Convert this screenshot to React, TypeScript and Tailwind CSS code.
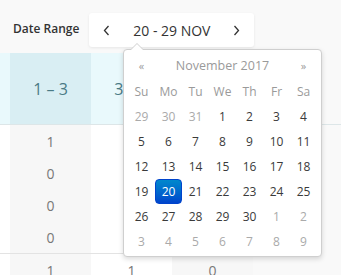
import { ReactNode } from "react";

type Day = { n: number; muted?: boolean; active?: boolean };

const weeks: Day[][] = [
  [{ n: 29, muted: true }, { n: 30, muted: true }, { n: 31, muted: true }, { n: 1 }, { n: 2 }, { n: 3 }, { n: 4 }],
  [5, 6, 7, 8, 9, 10, 11].map((n) => ({ n })),
  [12, 13, 14, 15, 16, 17, 18].map((n) => ({ n })),
  [19, 20, 21, 22, 23, 24, 25].map((n) => ({ n, active: n === 20 })),
  [{ n: 26 }, { n: 27 }, { n: 28 }, { n: 29 }, { n: 30 }, { n: 1, muted: true }, { n: 2, muted: true }],
  [3, 4, 5, 6, 7, 8, 9].map((n) => ({ n, muted: true })),
];

const dayNames = ["Su", "Mo", "Tu", "We", "Th", "Fr", "Sa"];

const rows = [
  ["1", "2", "0"],
  ["0", "1", "0"],
  ["0", "0", "1"],
  ["0", "0", "0"],
];

function Chevron({ dir }: { dir: "left" | "right" }) {
  return (
    <svg width="7" height="11" viewBox="0 0 7 11" fill="none">
      <path
        d={dir === "left" ? "M5.5 1 L1.5 5.5 L5.5 10" : "M1.5 1 L5.5 5.5 L1.5 10"}
        stroke="#333"
        strokeWidth="1.3"
      />
    </svg>
  );
}

function Cell({ children, shade }: { children?: ReactNode; shade?: boolean }) {
  return (
    <div className={shade ? "w-[81px] h-[32px] flex items-center justify-center bg-[#f7f7f7]" : "w-[81px] h-[32px] flex items-center justify-center"}>
      {children}
    </div>
  );
}

function Calendar() {
  return (
    <div className="absolute left-[123px] top-[49px] w-[199px] bg-white border border-[#cfcfcf] rounded-[4px] shadow-[0_2px_5px_rgba(0,0,0,0.15)] px-[4px] pt-[4px] pb-[2px] text-[12px]">
      <div className="absolute -top-[7px] left-[6px] w-0 h-0 border-x-[7px] border-x-transparent border-b-[7px] border-b-[#cfcfcf]" />
      <div className="absolute -top-[6px] left-[7px] w-0 h-0 border-x-[6px] border-x-transparent border-b-[6px] border-b-white" />
      <div className="grid grid-cols-7 text-[#9a9a9a]">
        <div className="h-[25px] flex items-center justify-center text-[11px]">«</div>
        <div className="col-span-5 h-[25px] flex items-center justify-center text-[12.5px]">November 2017</div>
        <div className="h-[25px] flex items-center justify-center text-[11px]">»</div>
        {dayNames.map((d) => (
          <div key={d} className="h-[25px] flex items-center justify-center">
            {d}
          </div>
        ))}
      </div>
      <div className="grid grid-cols-7">
        {weeks.flat().map((d, i) => (
          <div
            key={i}
            className={
              d.active
                ? "h-[25px] flex items-center justify-center rounded-[4px] text-white bg-gradient-to-b from-[#0088cc] to-[#0044cc] border border-[#0044cc]"
                : d.muted
                ? "h-[25px] flex items-center justify-center text-[#aaa]"
                : "h-[25px] flex items-center justify-center text-[#3a3a3a]"
            }
          >
            {d.n}
          </div>
        ))}
      </div>
    </div>
  );
}

export default function App() {
  return (
    <div className="relative w-[341px] h-[275px] overflow-hidden bg-[#f9f9f9] font-['Open_Sans',sans-serif]">
      <div className="flex items-center pl-[13px] pt-[13px] h-[53px] pb-[6px]">
        <span className="text-[12px] font-semibold text-[#333] -mt-[3px]">Date Range</span>
        <div className="ml-[10px] flex h-[34px] bg-white rounded-[3px] shadow-[0_1px_3px_rgba(0,0,0,0.08)]">
          <button className="w-[35px] flex items-center justify-center">
            <Chevron dir="left" />
          </button>
          <div className="w-[95px] flex items-center justify-center text-[14px] text-[#333]">20 - 29 NOV</div>
          <button className="w-[35px] flex items-center justify-center">
            <Chevron dir="right" />
          </button>
        </div>
      </div>

      <div className="flex h-[72px] text-[16px] text-[#4a7a85] border-b border-[#dde6e8]">
        <div className="w-[10px] bg-[#e9f9fc]" />
        <div className="w-[81px] flex items-center justify-center bg-[#d9eef3]">1 – 3</div>
        <div className="w-[81px] flex items-center justify-center bg-[#e9f9fc]">3 – 5</div>
        <div className="w-[81px] flex items-center justify-center bg-[#d9eef3]">6 – 10</div>
      </div>

      <div className="bg-white w-[253px] text-[14px] text-[#777]">
        {rows.map((r, i) => (
          <div key={i} className="flex">
            <div className="w-[10px]" />
            <Cell shade>{r[0]}</Cell>
            <Cell>{r[1]}</Cell>
            <Cell shade>{r[2]}</Cell>
          </div>
        ))}
        <div className="flex border-t border-[#e3e3e3]">
          <div className="w-[10px]" />
          <Cell shade>1</Cell>
          <Cell>1</Cell>
          <Cell shade>0</Cell>
        </div>
      </div>

      <Calendar />
    </div>
  );
}
